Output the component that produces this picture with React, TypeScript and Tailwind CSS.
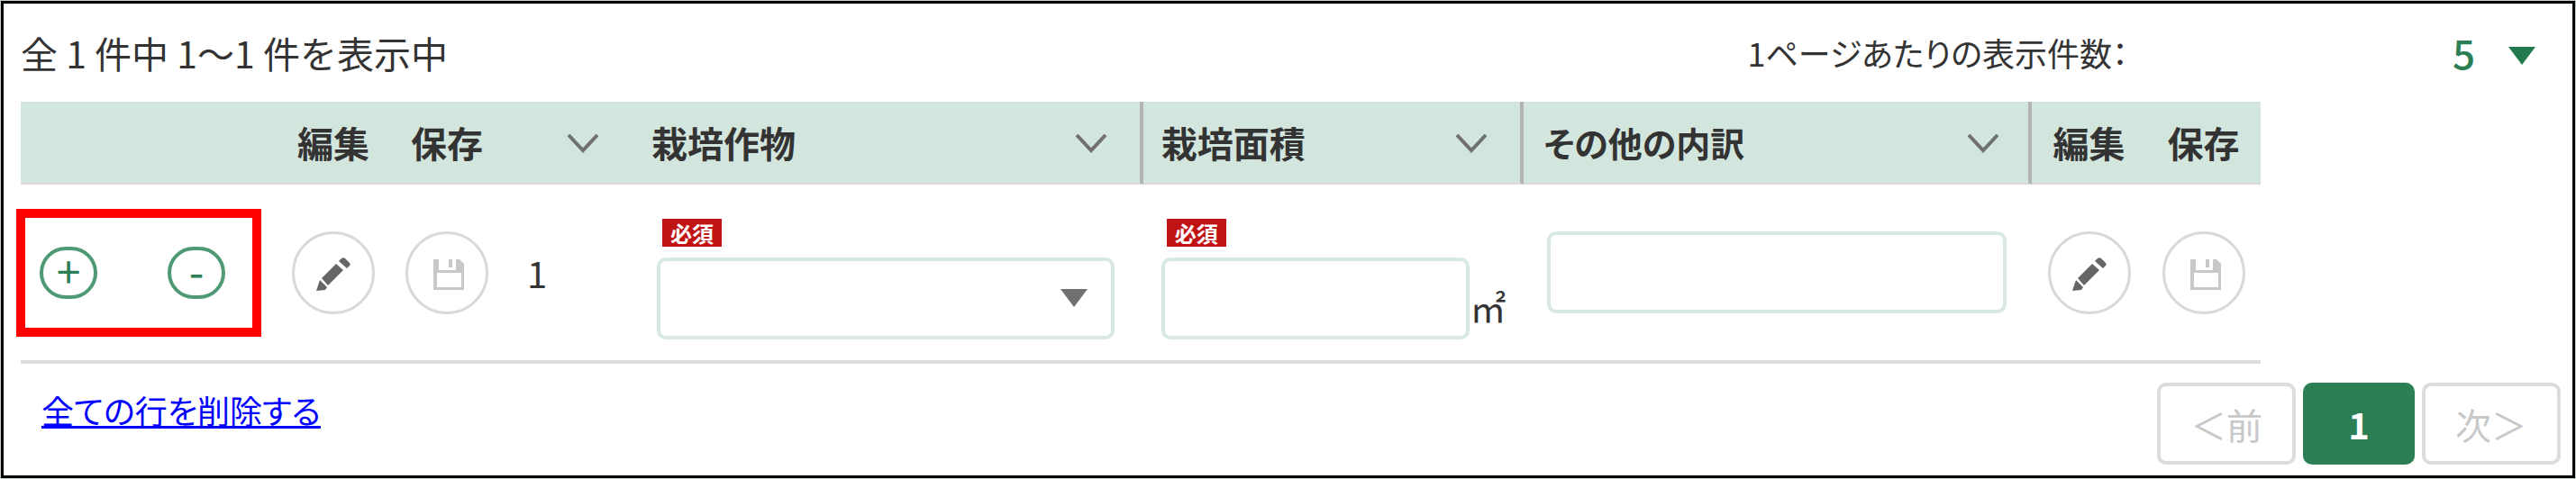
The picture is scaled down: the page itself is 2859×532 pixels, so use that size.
import type { ReactNode } from "react"

function Chevron() {
  return (
    <svg width="36" height="22" viewBox="0 0 36 22" fill="none" className="mt-1 shrink-0" aria-hidden="true">
      <path d="M2 1 L18 18 L34 1" stroke="#707070" strokeWidth="4" />
    </svg>
  )
}

function Triangle({ className }: { className: string }) {
  return (
    <svg width="30" height="20" viewBox="0 0 30 20" className={className} aria-hidden="true">
      <path d="M0 0 H30 L15 20 Z" fill="currentColor" />
    </svg>
  )
}

function PencilIcon() {
  return (
    <svg width="38" height="38" viewBox="0 0 38 38" fill="#666" className="mt-1" aria-hidden="true">
      <path d="M6 23 L22 7 L30 14 L13 31 Z" />
      <path d="M25 4 L28 1 C29 0 31 0 32 1 L36 5 C38 7 38 8 37 9 L34 12 Z" />
      <path d="M4 25 L12 33 L10 36 L0 37 Z" />
    </svg>
  )
}

function SaveIcon() {
  return (
    <svg width="34" height="34" viewBox="0 0 34 34" fill="#c8c8c8" className="mt-1 ml-1" aria-hidden="true">
      <path d="M0 0 H6 V12 H25 V0 H29 L34 5 V34 H0 Z M4 15 V31 H31 V15 Z" fillRule="evenodd" />
      <path d="M17 0 H21 V9 H17 Z" />
    </svg>
  )
}

function RoundButton({ label, disabled, children }: { label: string; disabled?: boolean; children: ReactNode }) {
  return (
    <button
      type="button"
      aria-label={label}
      disabled={disabled}
      className="mx-auto flex size-[92px] items-center justify-center rounded-full border-[3px] border-[#d9d9d9]"
    >
      {children}
    </button>
  )
}

function RowButton({ label, children }: { label: string; children: ReactNode }) {
  return (
    <button
      type="button"
      aria-label={label}
      className="flex h-[58px] w-16 items-center justify-center rounded-full border-4 border-[#4f9a74] pb-2 text-5xl leading-none text-[#2c7f55]"
    >
      {children}
    </button>
  )
}

function SortHeader({ title }: { title?: string }) {
  return (
    <div className="flex items-center justify-between">
      <span>{title}</span>
      <button type="button" aria-label="並べ替え">
        <Chevron />
      </button>
    </div>
  )
}

function Required() {
  return (
    <span className="ml-1.5 block h-[31px] w-[66px] bg-[#c01414] text-center text-2xl font-bold text-white">必須</span>
  )
}

export default function App() {
  return (
    <div className="bg-[#c4d0ca] p-px font-['Noto_Sans_CJK_JP',sans-serif] text-[40px] leading-[60px] text-[#333]">
      <main className="border-[3px] border-black bg-white">
        <div className="flex items-center justify-between pt-6 pr-[41px] pb-[25px] pl-[19px]">
          <p className="text-[41px]">全 1 件中 1～1 件を表示中</p>
          <div className="flex items-center">
            <label htmlFor="page-size" className="mr-[360px] text-4xl leading-[60px] [font-feature-settings:'palt']">
              1ページあたりの表示件数：
            </label>
            <div className="relative">
              <select
                id="page-size"
                className="block h-[60px] w-[92px] appearance-none bg-transparent text-[44px] leading-[60px] font-medium text-[#2c7f55]"
              >
                <option>5</option>
              </select>
              <Triangle className="pointer-events-none absolute top-6 right-0 text-[#227a4e]" />
            </div>
          </div>
        </div>

        <div className="pr-[346px] pl-[19px]">
          <table className="w-full table-fixed border-separate border-spacing-0">
            <colgroup>
              <col className="w-[284px]" />
              <col className="w-[126px]" />
              <col className="w-[126px]" />
              <col className="w-[138px]" />
              <col className="w-[23%]" />
              <col className="w-[17%]" />
              <col />
              <col className="w-[127px]" />
              <col className="w-[127px]" />
            </colgroup>
            <thead className="bg-[#d3e6de] text-left [font-feature-settings:'palt'] [&_th]:h-[92px] [&_th]:border-b-2 [&_th]:border-b-[#dcd8d5]">
              <tr>
                <td className="border-b-2 border-[#dcd8d5]"></td>
                <th className="text-center">編集</th>
                <th className="text-center">保存</th>
                <th className="pr-8">
                  <SortHeader />
                </th>
                <th className="border-r-4 border-r-[#b3b3b3] pr-9 pl-[26px]">
                  <SortHeader title="栽培作物" />
                </th>
                <th className="border-r-4 border-r-[#b3b3b3] pr-9 pl-5">
                  <SortHeader title="栽培面積" />
                </th>
                <th className="border-r-4 border-r-[#b3b3b3] pr-8 pl-[22px] text-[38px]">
                  <SortHeader title="その他の内訳" />
                </th>
                <th className="text-center">編集</th>
                <th className="text-center">保存</th>
              </tr>
            </thead>
            <tbody className="[&_td]:border-b-4 [&_td]:border-[#dcdcdc]">
              <tr>
                <td>
                  <div className="-ml-[5px] flex h-[142px] w-[272px] items-center justify-between border-[10px] border-[#f00] pr-[30px] pl-4">
                    <RowButton label="行を追加">+</RowButton>
                    <RowButton label="行を削除">-</RowButton>
                  </div>
                </td>
                <td>
                  <RoundButton label="編集">
                    <PencilIcon />
                  </RoundButton>
                </td>
                <td>
                  <RoundButton label="保存" disabled>
                    <SaveIcon />
                  </RoundButton>
                </td>
                <td className="pl-[26px]">1</td>
                <td className="px-8 pt-[38px] pb-[23px] align-top">
                  <Required />
                  <div className="relative mt-3">
                    <select
                      aria-label="栽培作物"
                      className="block h-[91px] w-full appearance-none rounded-[10px] border-4 border-[#d8e9e2] bg-white"
                    />
                    <Triangle className="pointer-events-none absolute top-[35px] right-[30px] text-[#707070]" />
                  </div>
                </td>
                <td className="pt-[38px] pr-5 pb-[23px] pl-5 align-top">
                  <Required />
                  <div className="mt-3 flex items-end">
                    <input
                      type="text"
                      aria-label="栽培面積"
                      className="h-[91px] min-w-0 flex-1 rounded-[10px] border-4 border-[#d8e9e2]"
                    />
                    <span className="mb-1.5 w-10">㎡</span>
                  </div>
                </td>
                <td className="pr-7 pl-[26px]">
                  <input
                    type="text"
                    aria-label="その他の内訳"
                    className="block h-[91px] w-full rounded-[10px] border-4 border-[#d8e9e2]"
                  />
                </td>
                <td>
                  <RoundButton label="編集">
                    <PencilIcon />
                  </RoundButton>
                </td>
                <td>
                  <RoundButton label="保存" disabled>
                    <SaveIcon />
                  </RoundButton>
                </td>
              </tr>
            </tbody>
          </table>
        </div>

        <div className="flex items-start justify-between pt-[21px] pr-[13px] pb-3 pl-[42px] [font-feature-settings:'palt']">
          <a href="#" className="text-4xl leading-[60px] text-[#00f] underline">
            全ての行を削除する
          </a>
          <nav className="flex gap-2">
            <button type="button" disabled className="h-[91px] w-[154px] rounded-[10px] border-4 border-[#dcdcdc] text-[#c8c8c8]">
              ＜前
            </button>
            <button type="button" className="h-[91px] w-[124px] rounded-[10px] bg-[#2c7f55] font-bold text-white">
              1
            </button>
            <button type="button" disabled className="h-[91px] w-[154px] rounded-[10px] border-4 border-[#dcdcdc] text-[#c8c8c8]">
              次＞
            </button>
          </nav>
        </div>
      </main>
    </div>
  )
}
